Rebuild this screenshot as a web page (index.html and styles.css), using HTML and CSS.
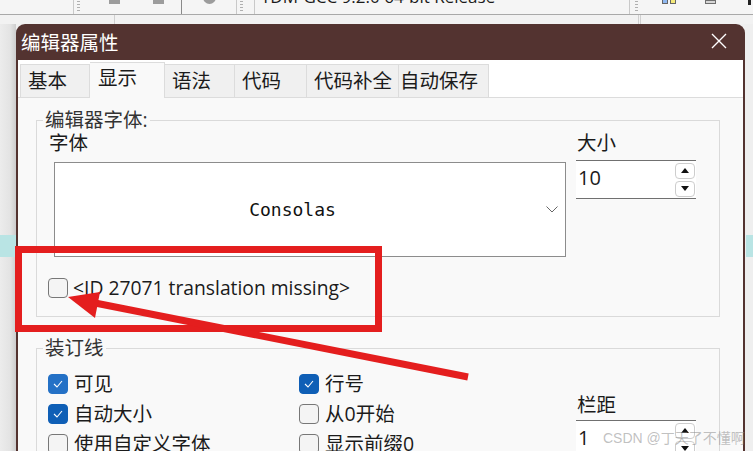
FILE: index.html
```html
<!DOCTYPE html>
<html lang="zh-CN">

<head>
    <meta charset="UTF-8">
    <meta name="viewport" content="width=device-width, initial-scale=1.0">
    <title>编辑器属性</title>
    <link rel="stylesheet" href="styles.css">
</head>

<body>
    <!-- IDE toolbar behind the dialog -->
    <div class="topbar">
        <span class="sep" style="margin-left:73px"></span>
        <span class="grip" style="margin-left:3px"></span>
        <span class="tool-sq" style="margin-left:29px"></span>
        <span class="tool-sq" style="margin-left:33px"></span>
        <span class="sep dark" style="margin-left:17px"></span>
        <span class="tool-dot" style="margin-left:21px"></span>
        <span class="sep" style="margin-left:20px"></span>
        <span class="grip" style="margin-left:3px"></span>
        <span class="sep" style="margin-left:11px"></span>
        <span class="compiler">TDM-GCC 9.2.0 64-bit Release</span>
        <span class="sep"></span>
        <span class="grip" style="margin-left:5px"></span>
        <span class="tool-icon" style="margin-left:24px"><i class="blue"></i><i class="yellow"></i></span>
        <span class="tool-sq small" style="margin-left:29px"></span>
        <span class="tool-black" style="margin-left:32px"></span>
    </div>
    <div class="subbar">
        <span class="sep" style="margin-left:114px"></span>
        <span class="sep" style="margin-left:523px"></span>
        <span class="sep" style="margin-left:1px"></span>
    </div>

    <div class="desk">
        <div class="side side-left"><div class="hl"></div></div>

        <div class="dialog">
            <div class="titlebar">
                <span>编辑器属性</span>
                <svg class="close" width="16" height="16" viewBox="0 0 16 16">
                    <path d="M1 1 L15 15 M15 1 L1 15" stroke="#fff" stroke-width="1.4" fill="none"/>
                </svg>
            </div>

            <div class="dialog-body">
                <div class="tabs">
                    <div class="tab t70">基本</div>
                    <div class="tab on">显示</div>
                    <div class="tab t70">语法</div>
                    <div class="tab t72">代码</div>
                    <div class="tab t92">代码补全</div>
                    <div class="tab last">自动保存</div>
                </div>

                <div class="panel">
                    <fieldset class="group">
                        <legend>编辑器字体:</legend>
                        <div class="font-row">
                            <div class="font-col">
                                <div class="label">字体</div>
                                <div class="select">
                                    <span class="select-val">Consolas</span>
                                    <svg class="chev" width="12" height="7" viewBox="0 0 12 7">
                                        <path d="M0.5 0.5 L6 6 L11.5 0.5" stroke="#666" stroke-width="1" fill="none"/>
                                    </svg>
                                </div>
                            </div>
                            <div class="size-col">
                                <div class="label">大小</div>
                                <div class="spin">
                                    <span class="spin-val">10</span>
                                    <div class="spin-btns">
                                        <span class="spin-btn"><i class="up"></i></span>
                                        <span class="spin-btn"><i class="down"></i></span>
                                    </div>
                                </div>
                            </div>
                        </div>
                        <div class="check-row first">
                            <span class="cb"></span>
                            <span class="latin">&lt;ID 27071 translation missing&gt;</span>
                        </div>
                    </fieldset>

                    <fieldset class="group second">
                        <legend>装订线</legend>
                        <div class="gutter">
                            <div class="col col1">
                                <div class="check-row">
                                    <span class="cb on hover"><svg width="18" height="18" viewBox="0 0 18 18"><path d="M5 9 L8 12 L13 6" stroke="#fff" stroke-width="1.1" fill="none"/></svg></span>
                                    <span>可见</span>
                                </div>
                                <div class="check-row">
                                    <span class="cb on"><svg width="18" height="18" viewBox="0 0 18 18"><path d="M5 9 L8 12 L13 6" stroke="#fff" stroke-width="1.1" fill="none"/></svg></span>
                                    <span>自动大小</span>
                                </div>
                                <div class="check-row">
                                    <span class="cb"></span>
                                    <span>使用自定义字体</span>
                                </div>
                            </div>
                            <div class="col col2">
                                <div class="check-row">
                                    <span class="cb on"><svg width="18" height="18" viewBox="0 0 18 18"><path d="M5 9 L8 12 L13 6" stroke="#fff" stroke-width="1.1" fill="none"/></svg></span>
                                    <span>行号</span>
                                </div>
                                <div class="check-row">
                                    <span class="cb"></span>
                                    <span>从0开始</span>
                                </div>
                                <div class="check-row">
                                    <span class="cb"></span>
                                    <span>显示前缀0</span>
                                </div>
                            </div>
                            <div class="col col3">
                                <div class="label">栏距</div>
                                <div class="spin">
                                    <span class="spin-val">1</span>
                                    <div class="spin-btns">
                                        <span class="spin-btn"><i class="up"></i></span>
                                        <span class="spin-btn"><i class="down"></i></span>
                                    </div>
                                </div>
                            </div>
                        </div>
                    </fieldset>
                </div>
            </div>
        </div>

        <div class="side side-right"><div class="hl"></div></div>
    </div>

    <!-- annotation drawn over the screenshot -->
    <div class="annot-box"></div>
    <svg class="annot-arrow" width="753" height="451" viewBox="0 0 753 451">
        <line x1="468" y1="377" x2="90" y2="302" stroke="#e41e1e" stroke-width="7"/>
        <polygon points="68,297 100,292 95,318" fill="#e41e1e"/>
    </svg>

    <div class="watermark">CSDN @丁天了不懂啊</div>
</body>

</html>
```

FILE: styles.css
```css
* {
    box-sizing: border-box;
}

html,
body {
    margin: 0;
}

body {
    position: relative;
    width: 753px;
    height: 451px;
    overflow: hidden;
    background: #f0f0f0;
    font-family: "Open Sans", "Noto Sans CJK SC", sans-serif;
    color: #1b1b1b;
}

/* toolbar behind */
.topbar {
    display: flex;
    align-items: flex-start;
    height: 15px;
    background: #f5f5f5;
    border-bottom: 1px solid #a9a9a9;
    overflow: hidden;
}

.sep {
    flex: none;
    width: 1px;
    height: 14px;
    background: #c9c9c9;
}

.sep.dark {
    background: #8a8a8a;
}

.grip {
    flex: none;
    width: 3px;
    height: 12px;
    margin-top: 1px;
    background: repeating-linear-gradient(to bottom, #b0b0b0 0 1px, transparent 1px 3px);
}

.tool-sq {
    flex: none;
    width: 11px;
    height: 4px;
    background: #9c9c9c;
}

.tool-sq.small {
    border: 1px solid #6f6f6f;
    background: #d6d6d6;
}

.tool-dot {
    flex: none;
    width: 13px;
    height: 13px;
    margin-top: -9px;
    border-radius: 50%;
    background: #9c9c9c;
}

.compiler {
    flex: none;
    width: 368px;
    margin-left: 6px;
    margin-top: -13px;
    font-size: 17px;
    line-height: 20px;
    white-space: nowrap;
}

.tool-icon {
    flex: none;
    display: flex;
    gap: 2px;
}

.tool-icon i {
    width: 6px;
    height: 4px;
    border: 1px solid #666;
    border-top: none;
}

.tool-icon .blue {
    background: #8fb8f0;
}

.tool-icon .yellow {
    background: #f5ea7a;
}

.tool-black {
    flex: none;
    width: 3px;
    height: 5px;
    background: #222;
}

.subbar {
    display: flex;
    height: 9px;
    background: #f2f2f2;
}

.subbar .sep {
    height: 9px;
    background: #d0d0d0;
}

/* desk + dialog */
.desk {
    display: flex;
    height: 427px;
}

.side {
    flex: none;
    padding-top: 211px;
}

.side-left {
    width: 16px;
    background: linear-gradient(to right, #ececec, #e3e3e3 65%, #cdcdcd);
}

.side-right {
    width: 8px;
    background: #efefef;
    padding-left: 1px;
}

.hl {
    height: 22px;
    background: #b9e4e4;
}

.dialog {
    flex: none;
    width: 729px;
    display: flex;
    flex-direction: column;
    padding: 0 2px;
    background: #533330;
    border-radius: 9px 9px 0 0;
}

.titlebar {
    flex: none;
    display: flex;
    align-items: center;
    justify-content: space-between;
    height: 36px;
    padding: 0 16px 2px 3px;
    color: #fff;
    font-size: 19.5px;
}

.dialog-body {
    flex: 1;
    display: flex;
    flex-direction: column;
    background: #fff;
}

.tabs {
    flex: none;
    display: flex;
    align-items: flex-end;
    height: 37px;
    padding-left: 2px;
}

.tab {
    flex: none;
    height: 33px;
    padding: 0 0 0 7px;
    border: 1px solid #dcdcdc;
    border-bottom: none;
    border-left: none;
    background: #f0f0f0;
    font-size: 19.5px;
    line-height: 31px;
    white-space: nowrap;
}

.tab:first-child {
    border-left: 1px solid #dcdcdc;
}

.t70 {
    width: 70px;
}

.t72 {
    width: 72px;
}

.t92 {
    width: 92px;
}

.tab.on {
    position: relative;
    z-index: 1;
    width: 75px;
    height: 36px;
    margin-bottom: -1px;
    padding-left: 8px;
    background: #f9f9f9;
    line-height: 30px;
}

.tab.last {
    width: 90px;
    padding-left: 1px;
}

.panel {
    flex: 1;
    padding: 11px 23px 0 18px;
    background: #f9f9f9;
    border-top: 1px solid #dcdcdc;
}

.group {
    margin: 0;
    min-width: 0;
    padding: 0 6px 18px 6px;
    border: 1px solid #dadada;
    font-size: 19.5px;
}

.group legend {
    padding: 0 2px;
    line-height: 22px;
    color: #333;
}

.group.second {
    margin-top: 20px;
}

.label {
    line-height: 22px;
}

.font-row {
    display: flex;
    margin-top: 1px;
}

.font-col {
    width: 523px;
}

.font-col .label {
    padding-left: 6px;
}

.select {
    display: flex;
    align-items: center;
    width: 512px;
    height: 95px;
    margin: 8px 0 0 11px;
    background: #fff;
    border: 1px solid #8c8c8c;
}

.select-val {
    flex: 1;
    text-align: center;
    font-family: "DejaVu Sans Mono", monospace;
    font-size: 18px;
    color: #111;
}

.chev {
    margin: 0 7px 0 16px;
}

.size-col {
    margin-left: 10px;
}

.size-col .label {
    padding-left: 1px;
}

.spin {
    display: flex;
    align-items: center;
    justify-content: space-between;
    width: 120px;
    height: 39px;
    margin-top: 6px;
    padding: 0 1px 0 2px;
    background: #fff;
    border-top: 1px solid #707070;
    border-bottom: 1px solid #707070;
}

.spin-val {
    font-size: 20px;
    line-height: 22px;
    margin-top: -3px;
}

.spin-btns {
    display: flex;
    flex-direction: column;
    gap: 2px;
}

.spin-btn {
    display: flex;
    align-items: center;
    justify-content: center;
    width: 20px;
    height: 16px;
    border: 1px solid #cdcdcd;
    border-radius: 4px;
    background: #fff;
}

.spin-btn i {
    width: 0;
    height: 0;
    border-left: 4px solid transparent;
    border-right: 4px solid transparent;
}

.spin-btn .up {
    border-bottom: 5px solid #111;
}

.spin-btn .down {
    border-top: 5px solid #111;
}

.check-row {
    display: flex;
    align-items: center;
    gap: 6px;
    height: 30px;
    line-height: 22px;
    white-space: nowrap;
}

.check-row.first {
    height: 20px;
    margin: 21px 0 0 5px;
    gap: 5px;
}

.latin {
    font-size: 19.3px;
}

.cb {
    flex: none;
    display: flex;
    align-items: center;
    justify-content: center;
    width: 20px;
    height: 20px;
    border: 1px solid #777;
    border-radius: 4px;
    background: #f4f4f4;
}

.cb.on {
    border-color: #0f5fb6;
    background: #0f5fb6;
}

.cb.on.hover {
    border-color: #2471c6;
    background: #2471c6;
}

.gutter {
    display: flex;
    margin-top: 10px;
}

.col1 {
    width: 256px;
    padding-left: 5px;
}

.col2 {
    width: 277px;
}

.col3 {
    padding-top: 25px;
}

.col3 .label {
    padding-left: 1px;
}

.col3 .spin {
    margin-top: 4px;
}

/* annotation overlay */
.annot-box {
    position: absolute;
    left: 15px;
    top: 246px;
    width: 367px;
    height: 86px;
    border: 7px solid #e41e1e;
}

.annot-arrow {
    position: absolute;
    left: 0;
    top: 0;
    pointer-events: none;
}

.watermark {
    position: absolute;
    left: 603px;
    top: 427px;
    font-family: "Liberation Sans", "Noto Sans CJK SC", sans-serif;
    font-size: 14px;
    color: rgba(140, 140, 140, 0.55);
    white-space: nowrap;
}
```
